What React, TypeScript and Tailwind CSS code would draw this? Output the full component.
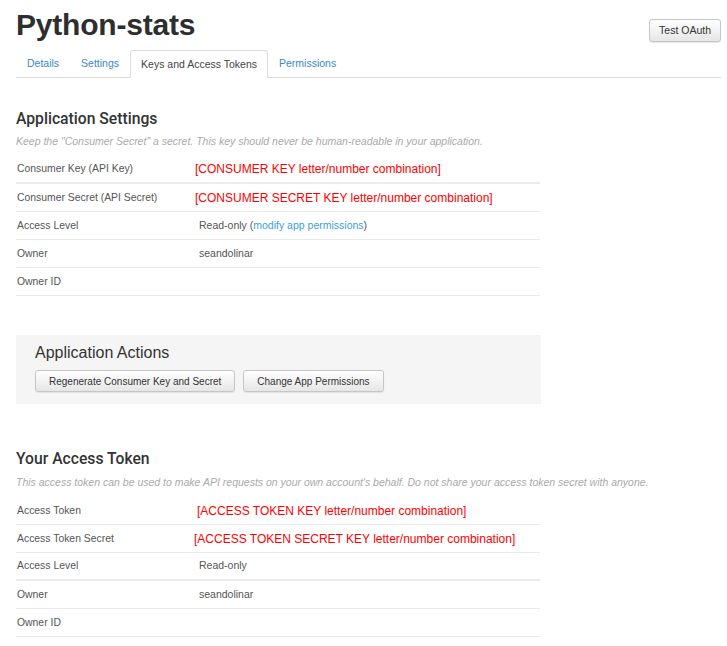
import React from "react";

type Row = {
  label: string;
  value?: React.ReactNode;
  thick?: boolean;
};

const RedKey = ({ text, shift }: { text: string; shift: string }) => (
  <span className={`text-[12px] text-[#ff0000] ${shift}`}>{text}</span>
);

const KeyTable = ({ rows }: { rows: Row[] }) => (
  <div className="mt-[8px] w-[524px]">
    {rows.map((r) => (
      <div
        key={r.label}
        className={`flex h-[28px] items-center border-[#ebebeb] ${
          r.thick ? "border-b-2" : "border-b"
        }`}
      >
        <div className="w-[183px] pl-px text-[10.4px] text-[#555]">{r.label}</div>
        <div className="text-[10.5px] text-[#555]">{r.value}</div>
      </div>
    ))}
  </div>
);

const GreyButton = ({ children }: { children: React.ReactNode }) => (
  <button className="h-[22px] rounded-[3px] border border-[#c6c6c6] bg-gradient-to-b from-white to-[#e6e6e6] px-[13px] text-[10px] text-[#333] shadow-[0_1px_1px_rgba(0,0,0,0.08)]">
    {children}
  </button>
);

const tabs = ["Details", "Settings", "Keys and Access Tokens", "Permissions"];

export default function App() {
  const appRows: Row[] = [
    {
      label: "Consumer Key (API Key)",
      value: <RedKey text="[CONSUMER KEY letter/number combination]" shift="-ml-[4px]" />,
      thick: true,
    },
    {
      label: "Consumer Secret (API Secret)",
      value: <RedKey text="[CONSUMER SECRET KEY letter/number combination]" shift="-ml-[4px]" />,
    },
    {
      label: "Access Level",
      value: (
        <span>
          Read-only (<span className="text-[#3aa0d6]">modify app permissions</span>)
        </span>
      ),
    },
    { label: "Owner", value: "seandolinar" },
    { label: "Owner ID" },
  ];

  const tokenRows: Row[] = [
    {
      label: "Access Token",
      value: <RedKey text="[ACCESS TOKEN KEY letter/number combination]" shift="-ml-[2px]" />,
    },
    {
      label: "Access Token Secret",
      value: <RedKey text="[ACCESS TOKEN SECRET KEY letter/number combination]" shift="-ml-[5px]" />,
    },
    { label: "Access Level", value: "Read-only", thick: true },
    { label: "Owner", value: "seandolinar" },
    { label: "Owner ID" },
  ];

  return (
    <div className="min-h-[646px] w-[727px] bg-white px-4 font-['Liberation_Sans',Arial,sans-serif]">
      {/* header */}
      <div className="flex items-start justify-between pt-[10px]">
        <h1 className="text-[30px] font-bold leading-[30px] tracking-[-0.2px] text-[#2e2e2e]">
          Python-stats
        </h1>
        <button className="-mr-[10px] mt-[9px] h-[23px] rounded-[3px] border border-[#c6c6c6] bg-gradient-to-b from-white to-[#e6e6e6] px-[9px] text-[10.5px] text-[#333] shadow-[0_1px_1px_rgba(0,0,0,0.1)]">
          Test OAuth
        </button>
      </div>

      {/* tabs */}
      <div className="mt-[8px] flex h-[28px] w-[705px] border-b border-[#dcdcdc]">
        {tabs.map((t) =>
          t === "Keys and Access Tokens" ? (
            <div
              key={t}
              className="-mb-px flex items-center rounded-t-[3px] border border-b-0 border-[#dcdcdc] bg-white px-[10px] text-[10.5px] text-[#444]"
            >
              {t}
            </div>
          ) : (
            <div
              key={t}
              className="flex items-center px-[11px] text-[10.5px] text-[#3a88c8]"
            >
              {t}
            </div>
          )
        )}
      </div>

      {/* application settings */}
      <h2 className="mt-[32px] font-['Roboto',sans-serif] text-[15.7px] font-medium leading-[18px] text-[#333]">
        Application Settings
      </h2>
      <p className="mt-[6px] text-[10.5px] italic leading-[14px] text-[#aaa]">
        Keep the "Consumer Secret" a secret. This key should never be human-readable in your application.
      </p>
      <KeyTable rows={appRows} />

      {/* actions */}
      <div className="mt-[39px] w-[525px] bg-[#f5f5f5] pb-[12px] pl-[19px] pt-[9px]">
        <h3 className="text-[16px] leading-[18px] text-[#333]">Application Actions</h3>
        <div className="mt-[8px] flex gap-[8px]">
          <GreyButton>Regenerate Consumer Key and Secret</GreyButton>
          <GreyButton>Change App Permissions</GreyButton>
        </div>
      </div>

      {/* access token */}
      <h2 className="mt-[46px] font-['Roboto',sans-serif] text-[15.7px] font-medium leading-[18px] text-[#333]">
        Your Access Token
      </h2>
      <p className="mt-[7px] text-[10.5px] italic leading-[14px] text-[#aaa]">
        This access token can be used to make API requests on your own account's behalf. Do not share your access token secret with anyone.
      </p>
      <KeyTable rows={tokenRows} />
    </div>
  );
}
